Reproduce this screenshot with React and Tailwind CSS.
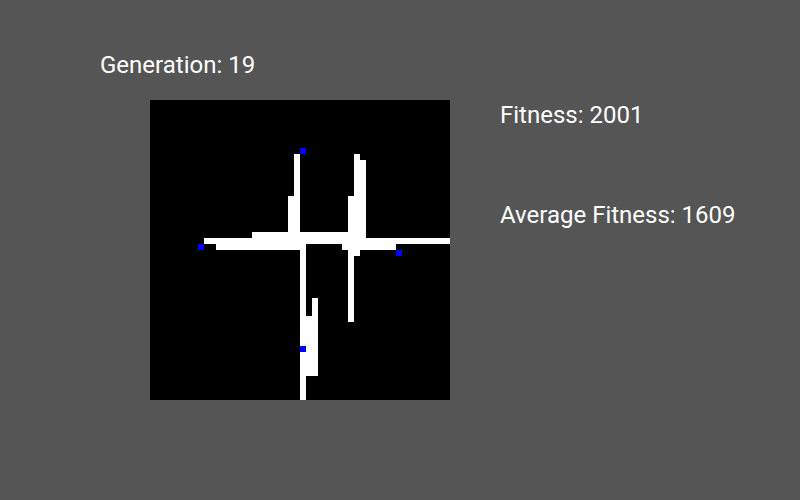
import React from 'react';

// white runs on the 50x50 board: [row, fromCol, toCol]
const runs = [
  [9, 24, 24], [9, 34, 34],
  ...[10, 11, 12, 13, 14, 15].flatMap(r => [[r, 24, 24], [r, 34, 35]]),
  ...[16, 17, 18, 19, 20, 21].flatMap(r => [[r, 23, 24], [r, 33, 35]]),
  [22, 17, 35],
  [23, 9, 49],
  [24, 11, 25], [24, 32, 40],
  [25, 25, 25], [25, 33, 34],
  ...[26, 27, 28, 29, 30, 31, 32].flatMap(r => [[r, 25, 25], [r, 33, 33]]),
  ...[33, 34, 35].flatMap(r => [[r, 25, 25], [r, 27, 27], [r, 33, 33]]),
  [36, 25, 27], [36, 33, 33],
  ...[37, 38, 39, 40, 41, 42, 43, 44, 45].map(r => [r, 25, 27]),
  ...[46, 47, 48, 49].map(r => [r, 25, 25]),
];

const blue = [[8, 25], [24, 8], [25, 41], [41, 25]];

function cellColor(r, c) {
  if (blue.some(([br, bc]) => br === r && bc === c)) return 'bg-[#0000ff]';
  if (runs.some(([rr, a, b]) => rr === r && c >= a && c <= b)) return 'bg-white';
  return 'bg-black';
}

function Board() {
  const cells = [];
  for (let r = 0; r < 50; r++) {
    for (let c = 0; c < 50; c++) {
      cells.push(<div key={r * 50 + c} className={cellColor(r, c)} />);
    }
  }
  return (
    <div className="grid grid-cols-[repeat(50,6px)] grid-rows-[repeat(50,6px)] w-[300px] h-[300px] shrink-0 bg-black">
      {cells}
    </div>
  );
}

export default function App() {
  return (
    <div className="w-[800px] h-[500px] bg-[#555555] text-white text-[24px] leading-[24px] font-['Roboto',sans-serif] pt-[53px]">
      <div className="pl-[100px]">Generation: 19</div>
      <div className="flex gap-[50px] pl-[150px] mt-[23px]">
        <Board />
        <div className="flex flex-col gap-[76px] pt-[3px]">
          <div>Fitness: 2001</div>
          <div>Average Fitness: 1609</div>
        </div>
      </div>
    </div>
  );
}
